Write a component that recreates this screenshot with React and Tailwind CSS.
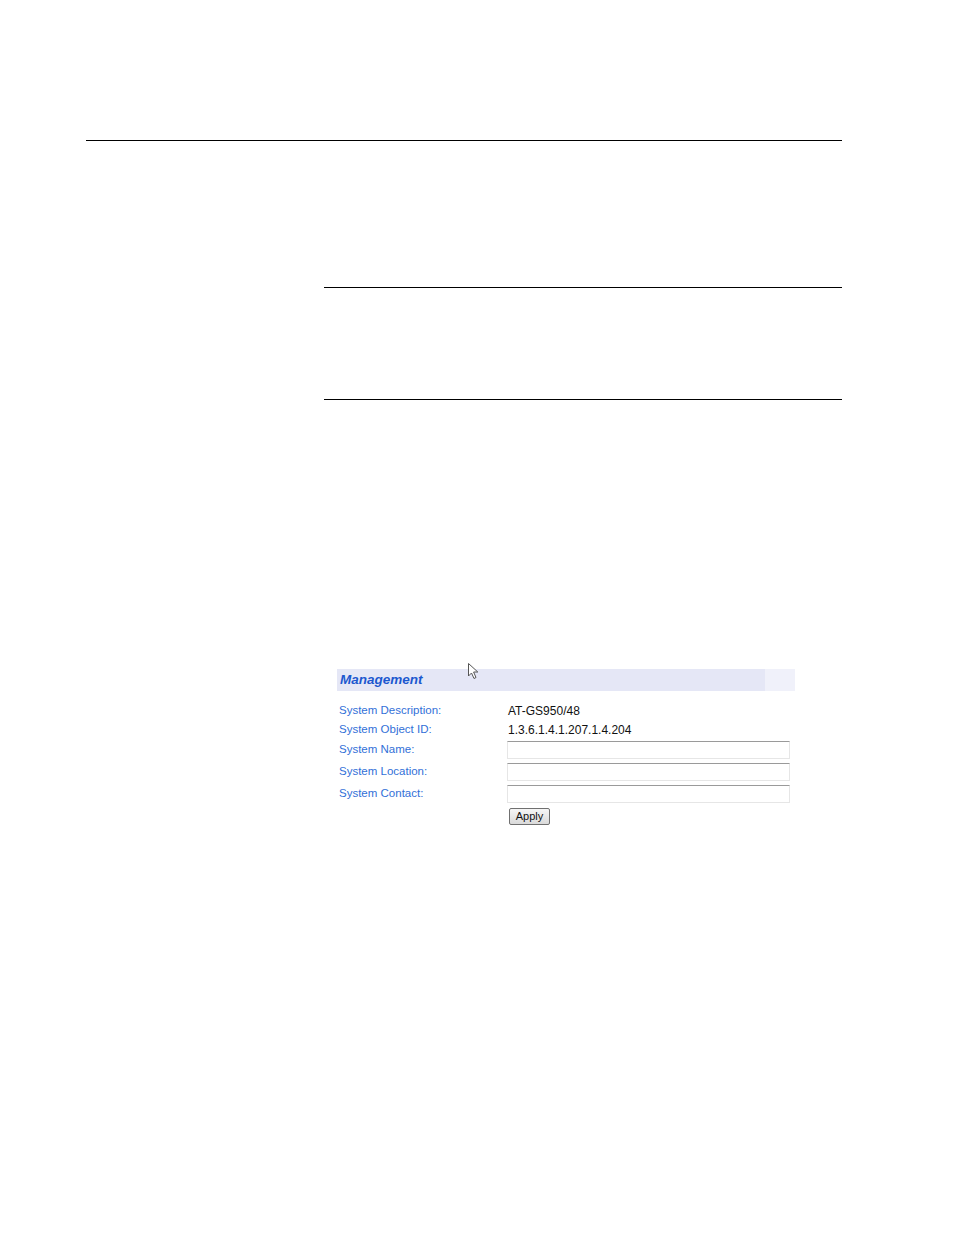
import React from "react";

const labelCls = "text-[11.5px] text-[#3270d8] leading-none";
const font = { fontFamily: '"Liberation Sans", Arial, sans-serif' };

function InputBox() {
  return (
    <div className="w-[283px] h-[18px] bg-white border border-[#e6e6e6] border-t-[#9a9a9a]" />
  );
}

export default function App() {
  return (
    <div className="min-h-[1235px] w-[954px] bg-white" style={font}>
      <div className="h-[140px]" />
      <div className="ml-[86px] w-[756px] h-px bg-black" />
      <div className="ml-[324px] w-[518px]">
        <div className="h-[146px]" />
        <div className="h-px bg-black" />
        <div className="h-[111px]" />
        <div className="h-px bg-black" />
      </div>
      <div className="h-[269px]" />
      <div className="ml-[337px] w-[458px] relative">
        <div className="flex h-[22px]">
          <div className="w-[428px] bg-[#e5e7f6] flex items-center pl-[3px]">
            <span className="text-[13.5px] font-bold italic text-[#1c58cf]">Management</span>
          </div>
          <div className="w-[30px] bg-[#f0f1fa]" />
        </div>
        <svg
          className="absolute left-[130px] top-[-7px]"
          width="14"
          height="18"
          viewBox="0 0 14 18"
        >
          <path
            d="M1.5 1.5 L1.5 14 L4.5 11 L7 16.5 L9 15.5 L6.6 10 L10.8 10 Z"
            fill="white"
            stroke="#555"
            strokeWidth="1"
            strokeLinejoin="round"
          />
        </svg>
        <div className="h-[10px]" />
        <div className="grid grid-cols-[170px_1fr]">
          <div className="h-[19px] flex items-center pl-[2px]">
            <span className={labelCls}>System Description:</span>
          </div>
          <div className="h-[19px] flex items-center pl-[1px]">
            <span className="text-[12px] text-[#111] leading-none">AT-GS950/48</span>
          </div>
          <div className="h-[19px] flex items-center pl-[2px]">
            <span className={labelCls}>System Object ID:</span>
          </div>
          <div className="h-[19px] flex items-center pl-[1px]">
            <span className="text-[12px] text-[#111] leading-none">1.3.6.1.4.1.207.1.4.204</span>
          </div>
          <div className="h-[22px] flex items-center pl-[2px]">
            <span className={labelCls}>System Name:</span>
          </div>
          <div className="h-[22px] flex items-center">
            <InputBox />
          </div>
          <div className="h-[22px] flex items-center pl-[2px]">
            <span className={labelCls}>System Location:</span>
          </div>
          <div className="h-[22px] flex items-center">
            <InputBox />
          </div>
          <div className="h-[22px] flex items-center pl-[2px]">
            <span className={labelCls}>System Contact:</span>
          </div>
          <div className="h-[22px] flex items-center">
            <InputBox />
          </div>
          <div className="h-[22px]" />
          <div className="h-[22px] flex items-center pl-[2px]">
            <button className="w-[41px] h-[17px] border border-[#707070] rounded-[2px] bg-gradient-to-b from-[#f6f6f6] to-[#dadada] text-[11px] text-[#111] leading-none flex items-center justify-center">
              Apply
            </button>
          </div>
        </div>
      </div>
    </div>
  );
}
